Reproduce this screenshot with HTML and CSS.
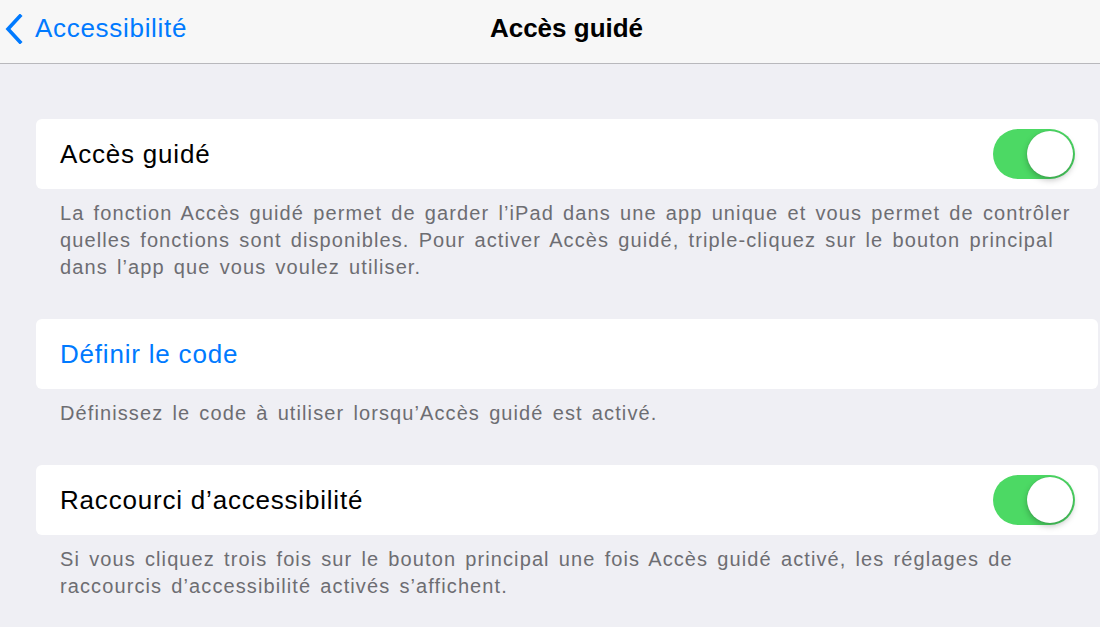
FILE: index.html
```html
<!DOCTYPE html>
<html lang="fr">
<head>
    <meta charset="utf-8">
    <title>Accès guidé</title>
    <link rel="stylesheet" href="styles.css">
</head>
<body>

    <div class="navbar">
        <a class="back" href="#">
            <svg class="chevron" width="18" height="30" viewBox="0 0 18 30">
                <path d="M15 2 L3 15 L15 28" fill="none" stroke="#007aff" stroke-width="3.6" stroke-linecap="square"/>
            </svg>
            <span>Accessibilité</span>
        </a>
        <div class="title">Accès guidé</div>
    </div>

    <div class="content">
        <!-- Guided access -->
        <div class="cell">
            <span class="label">Accès guidé</span>
            <div class="toggle on"><div class="knob"></div></div>
        </div>
        <p class="footer">La fonction Accès guidé permet de garder l’iPad dans une app unique et vous permet de contrôler quelles fonctions sont disponibles. Pour activer Accès guidé, triple-cliquez sur le bouton principal dans l’app que vous voulez utiliser.</p>

        <!-- Passcode -->
        <div class="cell">
            <span class="label link">Définir le code</span>
        </div>
        <p class="footer">Définissez le code à utiliser lorsqu’Accès guidé est activé.</p>

        <!-- Shortcut -->
        <div class="cell">
            <span class="label">Raccourci d’accessibilité</span>
            <div class="toggle on"><div class="knob"></div></div>
        </div>
        <p class="footer">Si vous cliquez trois fois sur le bouton principal une fois Accès guidé activé, les réglages de raccourcis d’accessibilité activés s’affichent.</p>
    </div>

</body>
</html>
```

FILE: styles.css
```css
* {
    margin: 0;
    padding: 0;
    box-sizing: border-box;
}

body {
    font-family: 'Liberation Sans', Arial, sans-serif;
    background-color: #efeff4;
    color: #000;
    height: 100vh;
    overflow: hidden;
}

/* Navigation bar */
.navbar {
    height: 64px;
    background-color: #f7f7f7;
    border-bottom: 1px solid #b8b8bc;
    display: flex;
    align-items: center;
    justify-content: center;
    position: relative;
}

.back {
    position: absolute;
    left: 5px;
    top: 0;
    height: 100%;
    display: flex;
    align-items: center;
    gap: 12px;
    color: #007aff;
    text-decoration: none;
    font-size: 26px;
    letter-spacing: 0.7px;
    padding-bottom: 6px;
}

.title {
    font-size: 26px;
    font-weight: bold;
    padding-bottom: 6px;
    margin-left: 33px;
}

/* Settings groups */
.content {
    padding: 55px 2px 0 36px;
}

.cell {
    height: 70px;
    background-color: #fff;
    border-radius: 6px;
    display: flex;
    align-items: center;
    justify-content: space-between;
    padding: 0 23px 0 24px;
}

.label {
    font-size: 26px;
    letter-spacing: 0.8px;
}

.link {
    color: #007aff;
}

.footer {
    font-size: 20px;
    letter-spacing: 1.1px;
    word-spacing: 2.5px;
    line-height: 27px;
    color: #6d6d72;
    padding: 11px 20px 0 24px;
    margin-bottom: 38px;
}

/* Switch */
.toggle {
    width: 82px;
    height: 50px;
    border-radius: 25px;
    background-color: #4cd964;
    position: relative;
}

.knob {
    position: absolute;
    right: 2px;
    top: 2px;
    width: 46px;
    height: 46px;
    border-radius: 50%;
    background-color: #fff;
    box-shadow: 0 3px 6px rgba(0, 0, 0, 0.25), 0 0 1px rgba(0, 0, 0, 0.2);
}
```
